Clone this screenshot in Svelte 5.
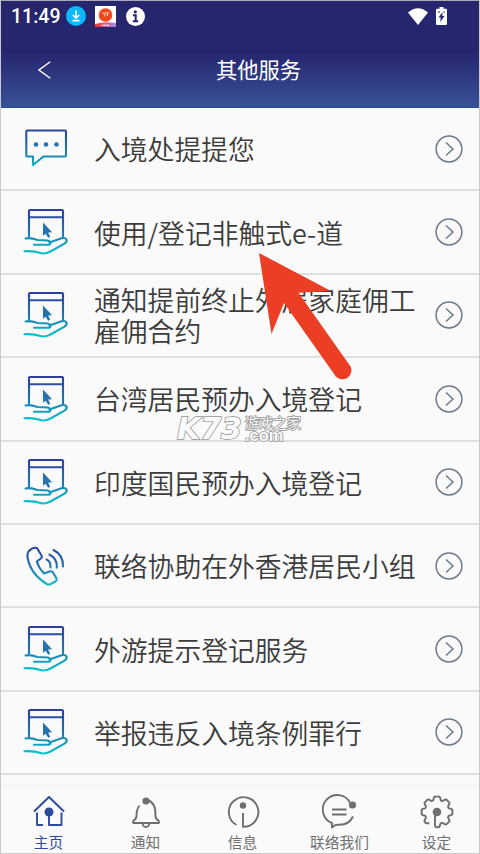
<script lang="ts">
  type Icon = "chat" | "hand" | "phone";

  interface Service {
    icon: Icon;
    label: string;
  }

  const services: Service[] = [
    { icon: "chat", label: "入境处提提您" },
    { icon: "hand", label: "使用/登记非触式e-道" },
    { icon: "hand", label: "通知提前终止外雇家庭佣工雇佣合约" },
    { icon: "hand", label: "台湾居民预办入境登记" },
    { icon: "hand", label: "印度国民预办入境登记" },
    { icon: "phone", label: "联络协助在外香港居民小组" },
    { icon: "hand", label: "外游提示登记服务" },
    { icon: "hand", label: "举报违反入境条例罪行" },
  ];

  const tabs = [
    { id: "home", label: "主页" },
    { id: "bell", label: "通知" },
    { id: "info", label: "信息" },
    { id: "contact", label: "联络我们" },
    { id: "gear", label: "设定" },
  ];

  let active = $state("home");

  // outline of the cog, one tooth every 45 degrees, left open at the lower left
  function cog() {
    const at = (deg: number, r: number) => {
      const a = (deg * Math.PI) / 180;
      return `${(18 + r * Math.cos(a)).toFixed(2)} ${(18 + r * Math.sin(a)).toFixed(2)}`;
    };
    let d = `M16 19V31.5Q16.2 33.3 18 33.3Q20.4 33.3 ${at(79, 14.4)}L${at(72, 11.8)}`;
    for (let t = 45; t >= -180; t -= 45) {
      d += `Q${at(t + 22, 11.6)} ${at(t + 17, 12.6)}L${at(t + 13, 14.4)}Q${at(t + 9, 16)} ${at(t + 4, 15.4)}`;
      d += `L${at(t - 4, 15.4)}Q${at(t - 9, 16)} ${at(t - 13, 14.4)}L${at(t - 17, 12.6)}`;
    }
    return d + `Q${at(-203, 11.6)} ${at(-208, 12.6)}L${at(-212, 14.6)}Q${at(-218, 16.4)} ${at(-226, 15.6)}L${at(-236, 13.6)}`;
  }
</script>

<div class="screen">
  <svg class="defs" width="0" height="0">
    <defs>
      <linearGradient id="ink" gradientUnits="userSpaceOnUse" x1="0" y1="2" x2="0" y2="46">
        <stop offset="0" stop-color="#2c3f9d" />
        <stop offset="0.5" stop-color="#2473b0" />
        <stop offset="1" stop-color="#08c4cd" />
      </linearGradient>
      <linearGradient id="badge" x1="0" x2="1">
        <stop offset="0" stop-color="#f5342c" />
        <stop offset="1" stop-color="#a78af0" />
      </linearGradient>
    </defs>
  </svg>

  <header>
    <div class="status">
      <span class="time">11:49</span>
      <svg class="download" width="20" height="20" viewBox="0 0 20 20">
        <circle cx="10" cy="10" r="10" fill="#0bb9fc" />
        <path d="M10 4.5v7M6.8 9l3.2 3.2L13.2 9M6.5 14.6h7" fill="none" stroke="#fff" stroke-width="1.6" />
      </svg>
      <svg class="app" width="21" height="21" viewBox="0 0 21 21">
        <path fill="#fff" d="M0 0h21v21H0z" />
        <path fill="url(#badge)" d="M0 18Q10 15 21 17v4H0z" />
        <circle cx="10.5" cy="9" r="6.8" fill="#f8451c" />
        <path d="M7.5 6.5l2 2 1-2.5M9.5 8.5l1 2M12 6l.5 4M12 8.5l2-2" stroke="#ffe6ce" fill="none" />
        <path d="M7 19.2h7" stroke="#ffd6e4" stroke-width="1.5" stroke-dasharray="1.5 .5" />
      </svg>
      <svg class="about" width="19" height="19" viewBox="0 0 19 19">
        <circle cx="9.5" cy="9.5" r="9.5" fill="#fff" />
        <circle cx="9.3" cy="4.8" r="1.6" fill="#26266f" />
        <path d="M7 8.3h2.7v6M6.8 14.3h5.4" fill="none" stroke="#26266f" stroke-width="2" />
      </svg>
      <svg class="wifi" width="20" height="17" viewBox="0 0 20 17">
        <path fill="#fff" d="M0 4.5Q10-4 20 4.500L10 17z" />
      </svg>
      <svg class="battery" width="11" height="18" viewBox="0 0 11 18">
        <path fill="#fff" d="M3.500 0h4v1.800H10q1 0 1 1V17q0 1-1 1H1q-1 0-1-1V2.800q0-1 1-1h2.500z" />
        <path fill="#26266f" d="M6.500 5L2.500 10.600h2.200L4.300 15l4.200-6H6.200zM2 4.500h2v1H2zM7.500 4.500h1.500v1H7.500z" />
      </svg>
    </div>
    <div class="bar">
      <svg class="back" width="13" height="18" viewBox="0 0 13 18">
        <path d="M12.300.7L1 9l11.300 8.300" fill="none" stroke="#fff" stroke-width="1.400" />
      </svg>
      <h1>其他服务</h1>
    </div>
  </header>

  <ul>
    {#each services as service}
      <li>
        <svg class="icon" width="48" height="48" viewBox="0 0 48 48">
          {#if service.icon === "chat"}
            <path d="M5.300 5.500H43q1 0 1 1V30.500q0 1-1 1H21.500L11 40v-8.500H5.300q-1 0-1-1V6.500q0-1 1-1z" />
            <g class="solid">
              <circle cx="14" cy="19.500" r="2.300" />
              <circle cx="24" cy="19.500" r="2.300" />
              <circle cx="34.500" cy="19.500" r="2.300" />
            </g>
          {:else if service.icon === "hand"}
            <path d="M7 29V3q0-1 1-1h32q1 0 1 1v26M7 9.200h34" />
            <path d="M3.500 30.500c4-1 8 0 12 1.500l10 .500q3 .7 3 2.500t-3 1.800H12M27.500 34.500l12-4.200q4-.8 5 1.200t-2 4.200L28.500 43.500q-4 2.200-8 2-9-2.800-18-2.300" />
            <path class="solid" d="M21 14.500v13.200l2.600-1.900 2.600 3.900 2-1-2.100-4.200 4-.3z" />
          {:else}
            <path d="M6.500 9.500q4-4.500 8.500-3.500l4.500 7.500q1 1.500-.5 2.800l-4.200 3.200q2.200 7 7.200 12l5.700-2q2.300-.7 3.300 1l3.500 6q.8 1.500-.8 2.800l-5 2.700q-2 1-4 0Q8 31.500 5.500 15q-.4-3.500 1-5.500z" />
            <path d="M24.500 17.500q4.500 2 4 8M27.500 12.700q8 3.500 7.300 13M31.500 8q10 5 9.500 16.500" />
          {/if}
        </svg>
        <span class="label">{service.label}</span>
        <svg class="go" width="28" height="28" viewBox="0 0 28 28">
          <circle cx="14" cy="14" r="12.900" />
          <path d="M11 7.500l7 6.500-7 6.500" />
        </svg>
      </li>
    {/each}
  </ul>

  <nav>
    {#each tabs as tab}
      <button class:active={active === tab.id} onclick={() => (active = tab.id)}>
        <svg width="36" height="36" viewBox="0 0 36 36">
          {#if tab.id === "home"}
            <path d="M3 17.500L18 3l15 14.500M6 18.500V31h6M18 18v13h12.500V18.500" />
            <circle class="dot" cx="18" cy="18" r="4.500" />
          {:else if tab.id === "bell"}
            <path d="M11.500 11.500Q8.500 15 8.500 22q0 3-3.300 5v2h25.600v-2q-3.300-2-3.300-5 .5-14-8.500-16M14.500 29q.5 4 3.500 4t3.500-4" />
            <circle class="dot" cx="18" cy="7" r="3.600" />
          {:else if tab.id === "info"}
            <path d="M11.500 31A14.800 14.800 0 1 1 18 32.800V19" />
            <circle class="dot" cx="18" cy="11.500" r="3.200" />
          {:else if tab.id === "contact"}
            <path d="M28 8.500A14.500 14.500 0 1 0 10 29v4.500Q13 30.200 17 30.800 27 31 31 22.500M10 15.500h14.500M10 20.500h14.500" />
            <circle class="dot" cx="30.500" cy="11" r="3.600" />
          {:else}
            <path d={cog()} />
            <circle class="dot" cx="18" cy="18" r="4.300" />
          {/if}
        </svg>
        <span>{tab.label}</span>
      </button>
    {/each}
  </nav>

  <div class="watermark">
    <span class="brand">K73</span>
    <span class="site">
      <span>游戏之家</span>
      <span class="domain">.com</span>
    </span>
  </div>

  <svg class="pointer" width="94" height="127" viewBox="0 0 94 127">
    <path fill="#ec3e25" d="M0 0l72 38-32.500 1.800 52.200 74a9 9 0 0 1-15 9.500L25 50 12.500 81z" />
  </svg>
</div>

<style>
  .screen {
    position: relative;
    display: flex;
    flex-direction: column;
    box-sizing: border-box;
    width: 480px;
    height: 854px;
    overflow: hidden;
    border: 1px solid #c9c9cb;
    border-top-color: #a9a9b4;
    background: #fafafa;
    font-family: "Noto Sans CJK SC", sans-serif;
  }

  .defs {
    position: absolute;
  }

  header {
    flex: none;
    box-sizing: border-box;
    height: 107px;
    border-bottom: 1px solid #24489a;
    background: linear-gradient(#26266f 0, #26266f 52px, #385096 105px);
    color: #fff;
  }

  .status {
    display: flex;
    align-items: center;
    height: 30px;
    padding: 0 32px 0 10px;
  }

  .time {
    width: 55px;
    padding-top: 2px;
    font: 500 19.5px/28px Roboto, sans-serif;
  }

  .app {
    margin-left: 9px;
  }

  .about {
    margin-left: 10px;
  }

  .wifi {
    margin-left: auto;
  }

  .battery {
    margin-left: 8px;
  }

  .bar {
    display: grid;
    grid-template-columns: 70px 1fr 33px;
    align-items: center;
    height: 78px;
  }

  .back {
    margin-left: 37px;
  }

  h1 {
    margin: 0;
    padding-bottom: 2px;
    font-size: 21.3px;
    font-weight: 400;
    line-height: 32px;
    text-align: center;
  }

  ul {
    flex: none;
    height: 677px;
    margin: 0;
    padding: 0;
    overflow: hidden;
    list-style: none;
  }

  li {
    display: flex;
    align-items: center;
    box-sizing: border-box;
    height: 83.4px;
    padding: 0 16px 0 21px;
    border-bottom: 2px solid #dfdfdf;
  }

  .icon {
    flex: none;
    fill: none;
    stroke: url(#ink);
    stroke-width: 2.1;
    stroke-linejoin: round;
    stroke-linecap: round;
  }

  .solid {
    fill: #2473b0;
    stroke: none;
  }

  .label {
    flex: 1;
    margin-left: 24px;
    color: #3c3c3c;
    font-size: 26.8px;
    font-weight: 350;
    line-height: 31px;
  }

  .go {
    flex: none;
    fill: none;
    stroke: #6d7a8a;
    stroke-width: 1.5;
  }

  nav {
    display: flex;
    flex: 1;
    margin: 0 -6px 0 -1px;
    border-top: 1px solid #f0f0f0;
    background: #fafafa;
  }

  button {
    display: flex;
    flex: 1 0 0;
    flex-direction: column;
    align-items: center;
    min-width: 0;
    padding: 8px 0 0;
    border: none;
    background: none;
    color: #6f6f6f;
    font-family: inherit;
    font-size: 14.7px;
    line-height: 23px;
    white-space: nowrap;
  }

  button svg {
    flex: none;
    fill: none;
    stroke: currentColor;
    stroke-width: 1.9;
    stroke-linejoin: round;
  }

  .dot {
    fill: currentColor;
    stroke: none;
  }

  .active {
    color: #2d4a9c;
  }

  .watermark {
    position: absolute;
    top: 415px;
    left: 176px;
    display: flex;
    color: #fafafa;
    -webkit-text-stroke: 1.6px #969696;
    paint-order: stroke fill;
  }

  .brand {
    width: 68px;
    font: italic 700 30px/25px "DejaVu Sans", sans-serif;
  }

  .site {
    display: flex;
    flex-direction: column;
    font-size: 14px;
    line-height: 13px;
  }

  .domain {
    font: 700 16.5px/12px "Liberation Sans", sans-serif;
  }

  .pointer {
    position: absolute;
    top: 252px;
    left: 258px;
  }
</style>
